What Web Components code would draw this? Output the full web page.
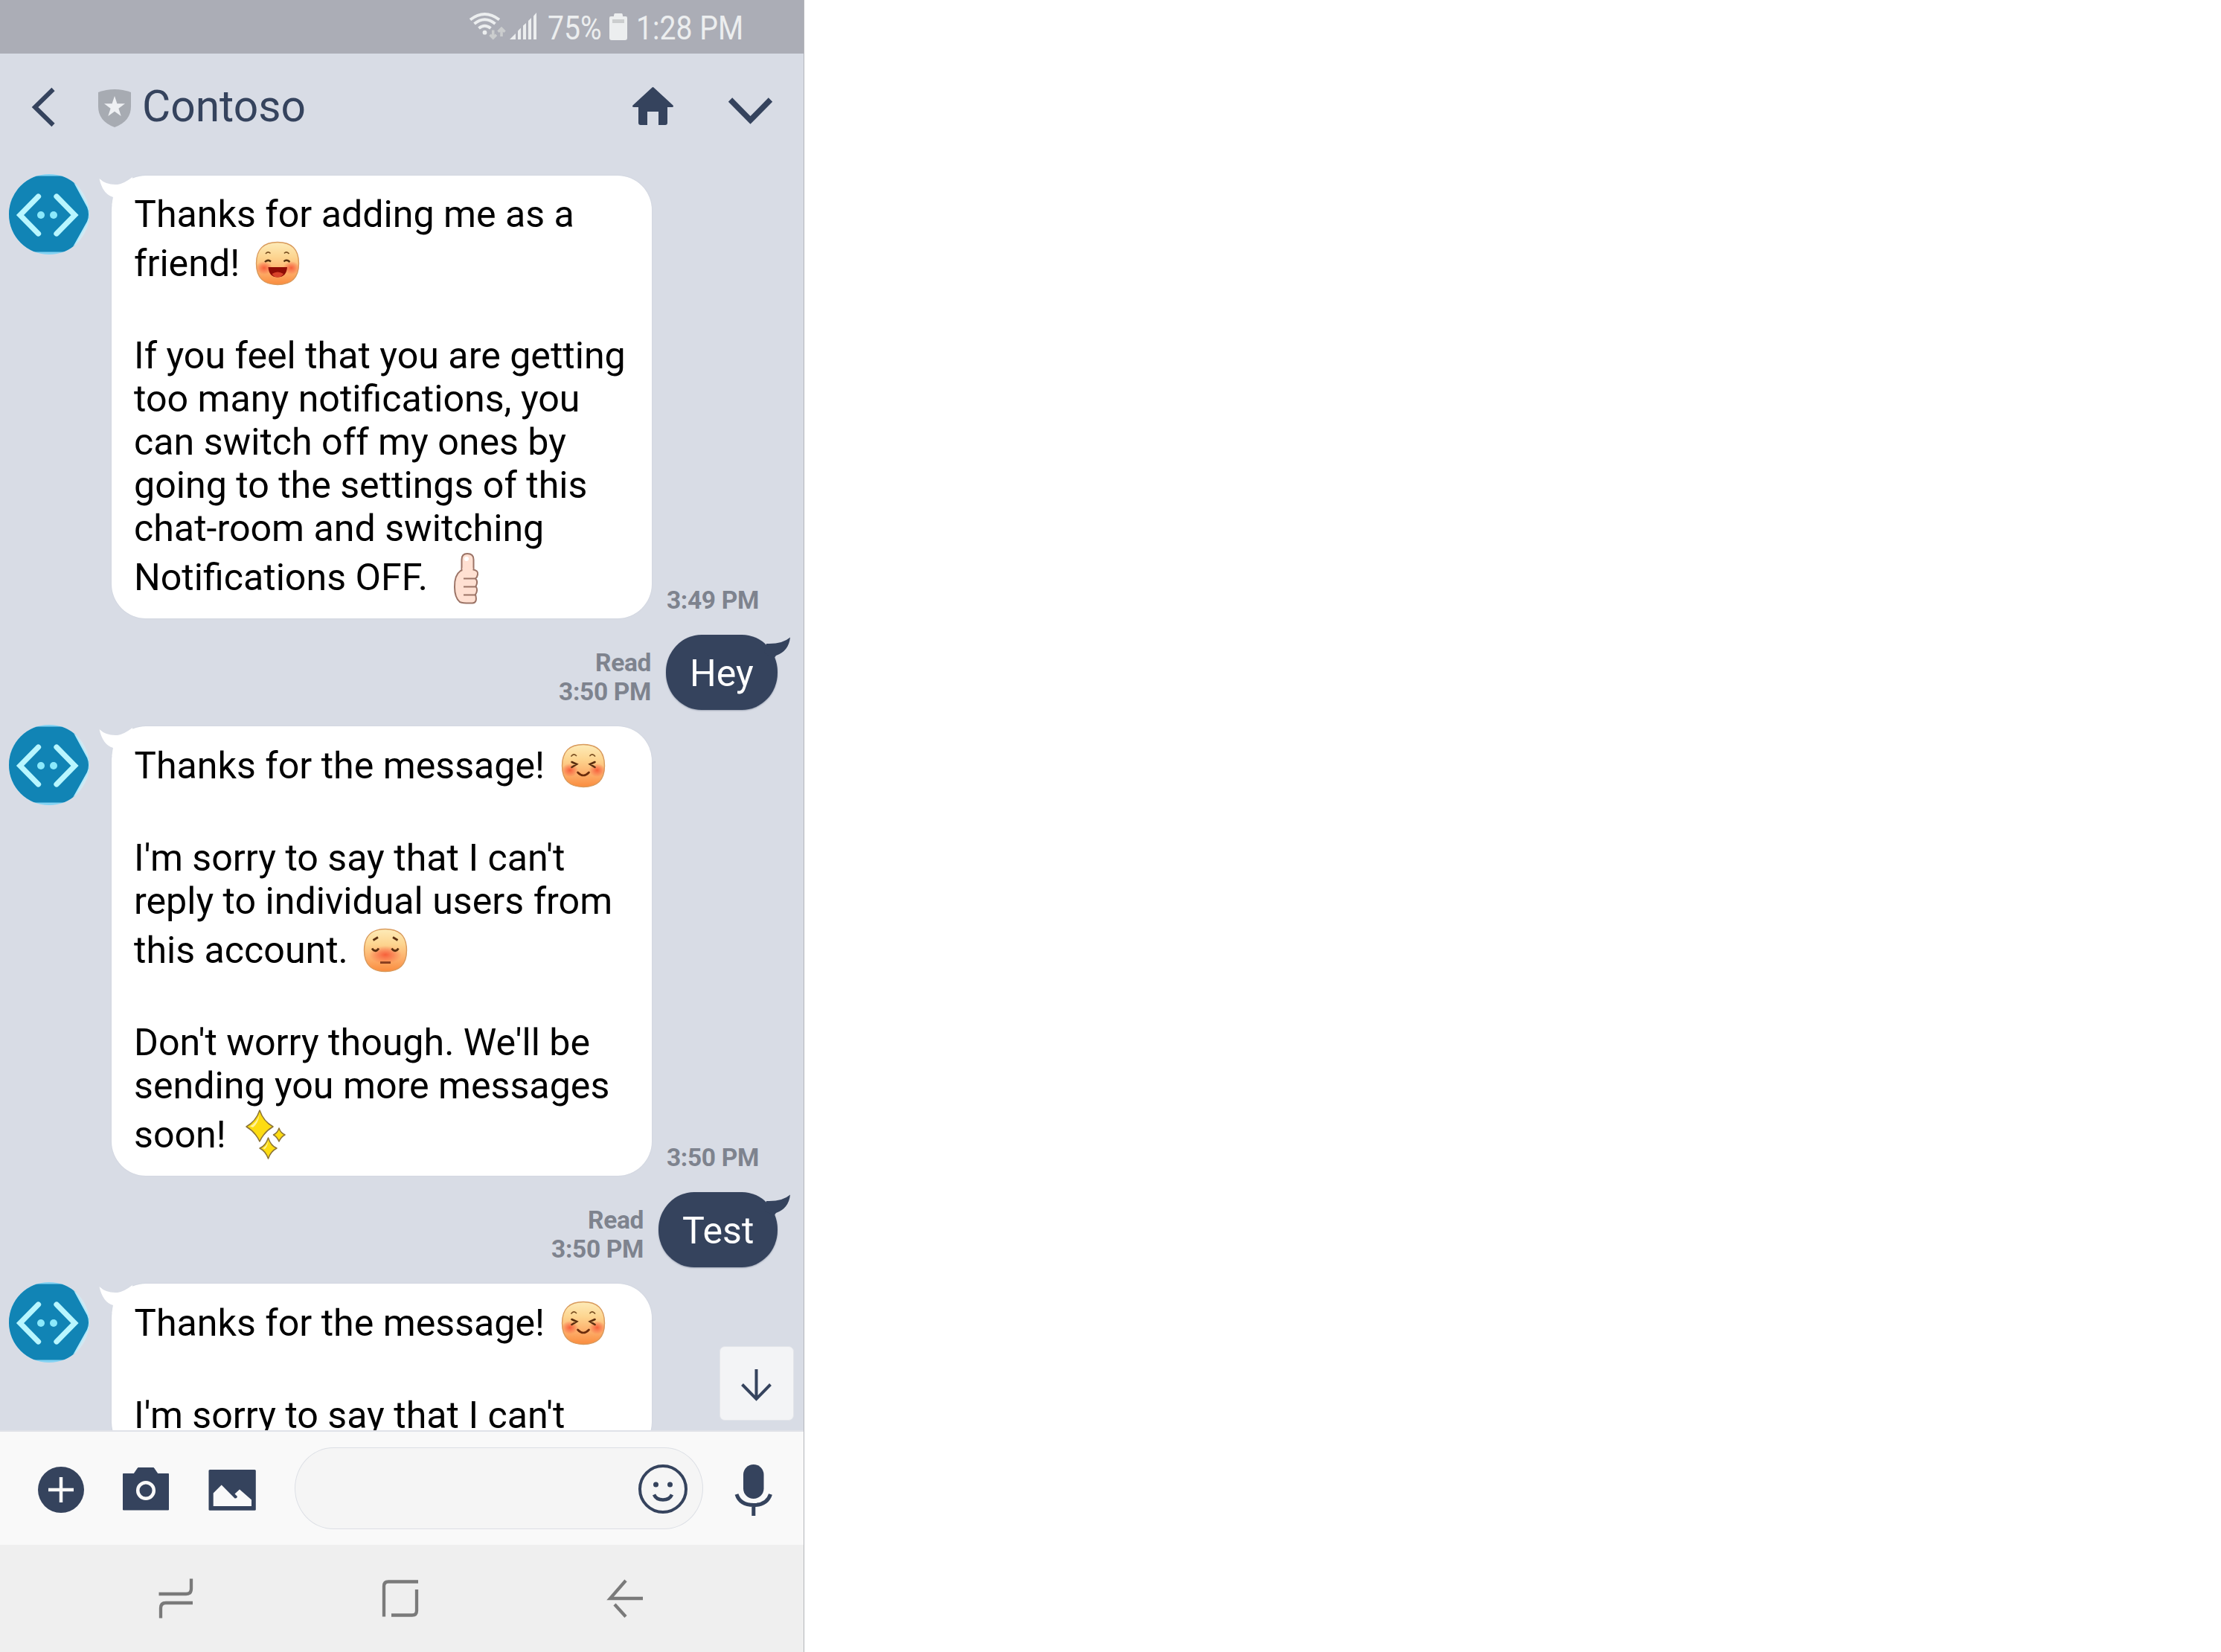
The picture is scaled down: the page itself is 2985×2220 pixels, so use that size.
<!DOCTYPE html>
<html lang="en">
<head>
<meta charset="utf-8">
<title>Contoso</title>
<style>
html,body{margin:0;padding:0;background:#fff}
body{font-family:Roboto,"Liberation Sans",sans-serif;width:2985px;height:2220px;overflow:hidden}
</style>
</head>
<body>
<phone-screen>
  <status-bar battery="75%" time="1:28 PM"></status-bar>
  <chat-header>Contoso</chat-header>
  <chat-feed>
    <message-in time="3:49 PM">
      <chat-line>Thanks for adding me as a</chat-line>
      <chat-line tall>friend!<chat-emoji kind="laugh"></chat-emoji></chat-line>
      <chat-line tall></chat-line>
      <chat-line>If you feel that you are getting</chat-line>
      <chat-line>too many notifications, you</chat-line>
      <chat-line>can switch off my ones by</chat-line>
      <chat-line>going to the settings of this</chat-line>
      <chat-line>chat-room and switching</chat-line>
      <chat-line tall>Notifications OFF.<chat-emoji kind="thumb"></chat-emoji></chat-line>
    </message-in>
    <message-out time="3:50 PM" style="--w:150px">Hey</message-out>
    <message-in time="3:50 PM" style="--pt:24px">
      <chat-line>Thanks for the message!<chat-emoji kind="squint"></chat-emoji></chat-line>
      <chat-line tall></chat-line>
      <chat-line>I'm sorry to say that I can't</chat-line>
      <chat-line>reply to individual users from</chat-line>
      <chat-line tall>this account.<chat-emoji kind="sad"></chat-emoji></chat-line>
      <chat-line tall></chat-line>
      <chat-line>Don't worry though. We'll be</chat-line>
      <chat-line>sending you more messages</chat-line>
      <chat-line tall>soon!<chat-emoji kind="sparkle"></chat-emoji></chat-line>
    </message-in>
    <message-out time="3:50 PM" style="--w:160px">Test</message-out>
    <message-in style="--pt:24px">
      <chat-line>Thanks for the message!<chat-emoji kind="squint"></chat-emoji></chat-line>
      <chat-line tall></chat-line>
      <chat-line>I'm sorry to say that I can't</chat-line>
    </message-in>
  </chat-feed>
  <compose-bar></compose-bar>
  <nav-bar></nav-bar>
</phone-screen>
<script>
function define(name, html) {
  customElements.define(name, class extends HTMLElement {
    connectedCallback() {
      if (this.shadowRoot) return;
      const root = this.attachShadow({mode: 'open'});
      root.innerHTML = typeof html === 'function' ? html(this) : html;
    }
  });
}

define('phone-screen', `<style>
:host{display:flex;flex-direction:column;width:1080px;height:2220px;background:#d8dce5;border-right:1px solid #b3b5ba}
</style><slot></slot>`);

define('status-bar', el => `<style>
:host{display:flex;height:72px;background:#abadb6;color:#eceeef;flex:none;font-size:45px;line-height:72px;align-items:flex-start;padding-left:626px}
svg{display:block;flex:none}
span{display:block;white-space:pre;transform-origin:0 0;transform:scaleX(.87);flex:none;margin-top:2px}
.b{width:69px;margin:2px 0 0 8px}
.t{margin-left:5px}
</style>
<svg width="102" height="72" viewBox="626 0 102 72">
 <g fill="none" stroke="#eceeef" stroke-width="4">
  <path d="M632 26.5Q651.500 11.500 671 26.500"/><path d="M637.500 32Q651.500 20.500 665.500 32"/><path d="M643.500 38Q651.500 31.500 659.500 38"/>
 </g><circle cx="651.500" cy="43.700" r="2.900" fill="#eceeef"/>
 <g fill="none" stroke="#cbcdce" stroke-width="3.500"><path d="M662.700 40.500V51M658.500 46.700L662.700 51L667 46.700"/><path d="M674 49V38M669.500 42.700L674 38.300L678.500 42.700"/></g>
 <g fill="#eceeef"><path d="M685 53L693 45V53Z"/><path d="M696 41.500L700 37.500V53H696Z"/><path d="M703 34.500L707 31V53H703Z"/><path d="M710 28L714 24V53H710Z"/><path d="M717 21.500L721 17V53H717Z"/></g>
</svg>
<span class="b">${el.getAttribute('battery')}</span>
<svg width="45" height="72" viewBox="805 0 45 72"><path fill="#eceeef" d="M826.500 18H835.500Q837 18 837 22H841Q843 22 843 24V51Q843 54 840 54H822Q819 54 819 51V24Q819 22 821 22H825Q825 18 826.500 18Z"/><path fill="#cbcdce" d="M823 26H839V31H823Z"/></svg>
<span class="t">${el.getAttribute('time')}</span>`);

define('chat-header', `<style>
:host{display:flex;height:150px;flex:none;color:#35435d;font-size:58.700px;line-height:68px}
svg{flex:none;display:block}
h1{margin:37px 0 0;font:inherit;width:640px;flex:none}
</style>
<svg width="191" height="150" viewBox="0 72 191 150">
 <path d="M71.500 120L47 144L71.500 168" fill="none" stroke="#35435d" stroke-width="6"/>
 <path d="M132 124Q154 116 176 124V143Q176 163 154 171Q132 163 132 143Z" fill="#a7abb2"/>
 <path d="M154 129L157.400 139.300H168L159.400 145.700L162.700 156L154 149.700L145.300 156L148.600 145.700L140 139.300H150.600Z" fill="#eef0f3"/>
</svg>
<h1><slot></slot></h1>
<svg width="249" height="150" viewBox="831 72 249 150">
 <path fill="#35435d" d="M877.500 117Q878 117 879 118L904.500 141.500Q906 144 903 144H897V165Q897 168 894 168H885V150H870V168H861Q858 168 858 165V144H852Q849 144 850.500 141.500L876 118Q877 117 877.500 117Z"/>
 <path d="M981.500 134L1008.500 161.500L1035.500 134" fill="none" stroke="#35435d" stroke-width="7.500"/>
</svg>`);

define('chat-feed', `<style>
:host{display:block;position:relative;height:1700px;flex:none;overflow:hidden}
.list{display:flex;flex-direction:column;gap:22px;padding-top:14px}
.down{position:absolute;left:967px;top:1587px;width:100px;height:100px;box-sizing:border-box;border-radius:7px;background:#f3f4f6;border:1px solid #e3e5ea}
.down svg{display:block}
</style><div class="list"><slot></slot></div>
<div class="down"><svg width="98" height="98" viewBox="968 1810 98 98"><path d="M1016.500 1840V1880M997.500 1860.500L1016.500 1880L1035.500 1860.500" fill="none" stroke="#35435d" stroke-width="4"/></svg></div>`);

define('bot-avatar', `<style>:host{display:block;width:108px;height:108px;flex:none;margin-top:-2px}svg{display:block}</style>
<svg width="108" height="108" viewBox="0 0 108 108"><defs><clipPath id="c"><circle cx="54" cy="54" r="54"/></clipPath></defs>
<g clip-path="url(#c)"><rect width="84" height="108" fill="#84d3f3"/><path d="M84 0H108V108H84Z" fill="#d3e8f1"/><path d="M36 2.500H76Q83 3 87 9L106 44Q110 54 106 64L87 98Q83 104.500 76 104.500H32L-4 94V10Z" fill="#1184b5"/>
<path d="M87 9L106 44Q110 54 106 64L87 98" stroke="#b5e9fa" stroke-width="2" fill="none"/></g>
<g fill="none" stroke="#b8f6ff" stroke-width="7.300" stroke-linecap="round" stroke-linejoin="miter"><path d="M39.500 30L15 55L39.500 80"/><path d="M64 30L88.500 55L64 80"/></g>
<circle cx="43" cy="55" r="5" fill="#8be9fb"/><circle cx="60" cy="55" r="5" fill="#8be9fb"/></svg>`);

define('message-in', el => `<style>
:host{display:flex;padding-left:12px;align-items:flex-start}
.bubble{position:relative;box-sizing:border-box;width:725.500px;margin-left:30px;border-radius:46px;background:#fff;padding:var(--pt,23px) 0 25.500px 30px;color:#000;font-size:50.150px;box-shadow:0 0 1.500px #c5cad6;flex:none}
.tail{position:absolute;left:-20px;top:0}
time{align-self:flex-end;margin:0 0 5px 20.500px;font-size:33.500px;letter-spacing:-.35px;font-weight:700;line-height:39.500px;color:#7e838e}
</style><bot-avatar></bot-avatar>
<div class="bubble"><svg class="tail" width="70" height="50" viewBox="0 0 70 50"><path fill="#fff" d="M3.500 4Q13 13 28 12Q36 11 48 2L52 40H20.500Q20.500 36 22 29Q8 25 3.500 4Z"/></svg><slot></slot></div>
${el.hasAttribute('time') ? `<time>${el.getAttribute('time')}</time>` : ''}`);

define('message-out', el => `<style>
:host{display:flex;justify-content:flex-end;padding-right:35px;height:101px}
.bubble{position:relative;box-sizing:border-box;width:var(--w);height:101px;border-radius:48px/50px;background:#35435d;color:#fff;font-size:50.150px;line-height:58px;padding:23px 0 0 32px;box-shadow:0 1px 2px #9aa2b2}
svg{position:absolute;right:-18px;top:0}
.meta{align-self:flex-end;text-align:right;margin:0 20px 5px 0;font-size:33.500px;letter-spacing:-.35px;font-weight:700;line-height:39px;color:#7e838e}
.meta div{display:block}
</style><div class="meta"><div>Read</div><div>${el.getAttribute('time')}</div></div>
<div class="bubble"><svg width="60" height="50" viewBox="0 0 60 50"><path fill="#35435d" d="M59 3.500Q48 13 27 12L24 24L37 32L40 28Q57 22 59 3.500Z"/></svg><slot></slot></div>`);

define('chat-line', `<style>
:host{display:flex;align-items:flex-end;height:58.100px;line-height:58.100px;white-space:pre}
:host([tall]){height:66px}
</style><slot></slot>`);

const face = `<defs>
<linearGradient id="s" x1="0" y1="0" x2="0" y2="1"><stop offset="0" stop-color="#fdebb8"/><stop offset=".35" stop-color="#fdd590"/><stop offset=".7" stop-color="#fdae6a"/><stop offset="1" stop-color="#fa8c3e"/></linearGradient>
<radialGradient id="r"><stop offset="0" stop-color="#f5502f" stop-opacity=".85"/><stop offset=".5" stop-color="#f75c3e" stop-opacity=".5"/><stop offset="1" stop-color="#f75c3e" stop-opacity="0"/></radialGradient></defs>
<path d="M34 5.500C53 5.500 62.500 15 62.500 34C62.500 53 53 62.500 34 62.500C15 62.500 5.500 53 5.500 34C5.500 15 15 5.500 34 5.500Z" fill="url(#s)" stroke="#d99a5c" stroke-width="1.400"/>`;
const cheeks = `<ellipse cx="16" cy="40" rx="11" ry="9" fill="url(#r)"/><ellipse cx="52.500" cy="40" rx="11" ry="9" fill="url(#r)"/>`;
const brows = `<path d="M18 21Q21 17 24.500 20.500M43 20.500Q46 17 49.500 21" stroke="#7a5022" stroke-width="1.700"/>`;
const emoji = {
  laugh: face + cheeks + `<g fill="none">${brows}<path d="M17 32Q21 28 25 31.500M42.500 31.500Q46 28 50.500 32" stroke="#54300f" stroke-width="2.400"/></g><path d="M21.500 39H47Q46 52.500 34 52.500Q22.500 52.500 21.500 39Z" fill="#8f0c05"/><path d="M26.500 48Q34 43 42 48Q39 52.500 34 52.500Q29 52.500 26.500 48Z" fill="#d8432a"/>`,
  squint: face + cheeks + `<g fill="none" stroke-linecap="round">${brows}<path d="M18.500 29L25 32L18.500 36M49.500 29L43 32L49.500 36" stroke="#5b2e10" stroke-width="2.600"/><path d="M26.500 43Q34 51 41.500 43" stroke="#6b2c0c" stroke-width="2.700"/></g>`,
  sad: face + `<ellipse cx="34" cy="40" rx="22" ry="12" fill="url(#r)"/><g fill="none" stroke="#5b3010" stroke-width="2.800"><path d="M17.500 20.500L24 16.500M44 16.500L50.500 20.500"/><path d="M16 31.500Q20.500 38 25 31.500M42.500 31.500Q47 38 51.500 31.500"/><path d="M27 50.500H41" stroke="#8b4020" stroke-width="3"/></g>`,
  thumb: `<g stroke="#9c7467" stroke-width="2" fill="#ffe0d2" stroke-linejoin="round"><path d="M27.500 24V9Q27.500 1 35 1Q43.500 1 43.500 9V24Z"/><path d="M26 24Q30 22 43 22.500Q50 23.500 49 29Q48.500 32.500 46 34.500Q50 38 46.500 45Q50 50 46 56Q49 67 42 67.500Q30 68 25 66Q18 60 18 46Q17.500 30 26 24Z"/><path d="M30 34.500H46M30 45.500H46.500M30 56.500H46" fill="none"/></g><path d="M28.500 20H42.500V26H28.500Z" fill="#ffe0d2"/><circle cx="34" cy="8" r="3" fill="#fff"/>`,
  sparkle: `<g fill="#fddc12" stroke="#8c7438" stroke-width="1.500" stroke-linejoin="round"><path d="M26 1Q31 16 44 23Q32 30 26 43Q20 30 8 23Q21 16 26 1Z"/><path d="M52 25Q54 31.500 60 34Q54.500 37 52 43Q49.500 37 44.500 34Q50 31.500 52 25Z"/><path d="M37.500 38Q41 49 49 52Q41 56 37.500 66Q34 56 26 52Q34 49 37.500 38Z"/></g><path d="M25.500 7Q22 18 13 22.500L17 24Q24 19 25.500 7ZM37.500 42Q35 50 30 52L33 53Q37 49 37.500 42Z" fill="#fff3a0"/>`
};
const indent = {laugh: 17, squint: 18, sad: 16, thumb: 18.5, sparkle: 19};
define('chat-emoji', el => `<style>:host{display:flex;align-items:center;height:58.100px;width:68px;flex:none;margin-left:${indent[el.getAttribute('kind')]}px}svg{display:block;flex:none;overflow:visible}</style><svg width="68" height="68" viewBox="0 0 68 68">${emoji[el.getAttribute('kind')]}</svg>`);

define('compose-bar', `<style>
:host{display:flex;box-sizing:border-box;height:154px;flex:none;background:#f9f9f9;border-top:2px solid #e0e2e8;align-items:flex-start}
svg{display:block;flex:none}
.field{box-sizing:border-box;width:549px;height:110px;margin-top:21px;border:1.500px solid #dcdfe5;border-radius:52px/55px;background:#f5f5f5;display:flex;justify-content:flex-end;flex:none}
</style>
<svg width="396" height="152" viewBox="0 1924 396 152">
 <circle cx="82" cy="2002" r="31" fill="#35435d"/><path d="M65 2002H99M82 1985V2019" stroke="#f9f9f9" stroke-width="4.500"/>
 <path fill="#35435d" stroke="#35435d" stroke-linejoin="round" d="M165.500 1980.500H180L185.500 1972.500H206.500L212 1980.500H226.500V2029H165.500Z"/><circle cx="196" cy="2003" r="10.800" fill="none" stroke="#f9f9f9" stroke-width="4.500"/>
 <rect x="280.500" y="1975" width="63.300" height="54.700" rx="1.500" fill="#35435d"/><path fill="#f9f9f9" d="M286.700 2024V2006.500L297.700 1995.500L315.500 2013.500Q318.500 2014 319 2011L315.500 2007.500L322 2001.500L338 2015.500V2024Z"/>
</svg>
<div class="field"><svg width="87" height="107" viewBox="857 1946 87 107"><g fill="none" stroke="#35435d" stroke-width="4"><circle cx="891" cy="2001" r="31"/><path d="M879 2008.500Q882 2015.500 891 2015.500Q900 2015.500 903 2008.500" stroke-width="4.500"/></g><circle cx="881.500" cy="1995" r="3.500" fill="#35435d"/><circle cx="900.500" cy="1995" r="3.500" fill="#35435d"/></svg></div>
<svg width="135" height="152" viewBox="944.500 1924 135 152"><rect x="998.500" y="1968" width="27.500" height="46" rx="13.700" fill="#35435d"/><path d="M989.500 2008Q994 2022.500 1012.300 2022.500Q1030.500 2022.500 1035 2008M1012.300 2022V2037" fill="none" stroke="#35435d" stroke-width="5"/></svg>`);

define('nav-bar', `<style>
:host{display:block;height:144px;flex:none;background:#efefef}svg{display:block}
</style><svg width="1080" height="144" viewBox="0 2076 1080 144"><g fill="none" stroke="#7a7a7a" stroke-width="4.300">
<path d="M213.500 2142H250Q257 2142 257 2135V2121.500"/><path d="M259 2154H223Q216 2154 216 2161V2174.500"/>
<path d="M562 2125.500H522Q516 2125.500 516 2131.500V2172.500"/><path d="M526 2170.500H554Q560 2170.500 560 2164.500V2136"/>
<path d="M864 2148H820L841 2124"/><path d="M826 2156L841 2172.500"/></g></svg>`);
</script>
</body>
</html>
